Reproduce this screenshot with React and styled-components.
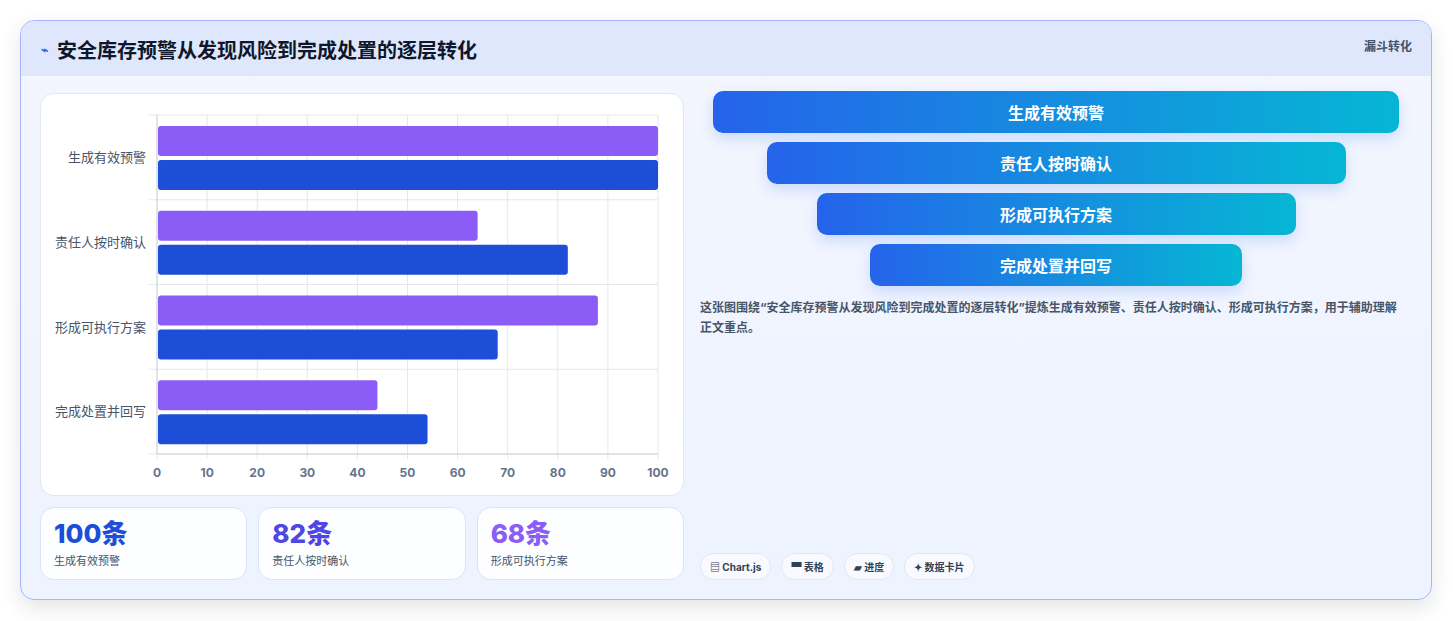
import React from "react";
import styled, { createGlobalStyle } from "styled-components";

const G = createGlobalStyle`
  body{margin:0;background:#fff;font-family:Inter,"Noto Sans CJK SC",sans-serif;}
`;
const Page = styled.div`padding:20px 21px 21px 20px;height:621px;box-sizing:border-box;`;
const Card = styled.div`
  height:580px;box-sizing:border-box;border:1px solid #a5b4fc;border-radius:14px;overflow:hidden;
  background:linear-gradient(180deg,#f3f6fe,#edf3ff);box-shadow:0 8px 20px rgba(30,41,59,.12);
  display:flex;flex-direction:column;`;
const Header = styled.div`
  height:55px;background:#dfe7fd;display:flex;align-items:flex-start;justify-content:space-between;padding:0 19px 0 20px;`;
const Title = styled.h1`margin:14px 0 0;font-size:20px;font-weight:700;color:#0f172a;display:flex;align-items:center;gap:9px;`;
const Badge = styled.span`margin-top:16px;font-size:12px;font-weight:700;color:#475569;`;
const Body = styled.div`flex:1;display:grid;grid-template-columns:644px 1fr;gap:16px;padding:17px 19px 19px 19px;`;
const Left = styled.div`display:flex;flex-direction:column;gap:11px;`;
const ChartCard = styled.div`height:403px;background:#fff;border:1px solid #e2e8f0;border-radius:14px;box-sizing:border-box;`;
const Stats = styled.div`display:grid;grid-template-columns:repeat(3,1fr);gap:11px;`;
const Stat = styled.div`height:73px;box-sizing:border-box;background:rgba(255,255,255,.85);border:1px solid #dbe4f5;border-radius:14px;padding:10px 13px;`;
const Num = styled.div`font-size:26px;font-weight:800;color:${p=>p.c};line-height:32px;`;
const Lab = styled.div`font-size:11px;color:#475569;margin-top:2px;`;
const Right = styled.div`display:flex;flex-direction:column;`;
const Funnel = styled.div`display:flex;flex-direction:column;align-items:center;gap:9px;margin-top:-2px;`;
const Step = styled.div`
  width:${p=>p.w}px;height:42px;border-radius:10px;background:linear-gradient(90deg,#2563eb,#06b6d4);
  color:#fff;font-weight:700;font-size:16px;display:flex;align-items:center;justify-content:center;
  box-shadow:0 6px 14px rgba(37,99,235,.18);`;
const Desc = styled.p`margin:12px 8px 0 0;font-size:12px;font-weight:700;color:#475569;line-height:20px;`;
const Tags = styled.div`margin-top:auto;display:flex;gap:10px;`;
const Tag = styled.span`height:27px;box-sizing:border-box;padding:0 9px;border:1px solid #e2e8f0;border-radius:14px;background:#f8faff;font-size:10px;font-weight:700;color:#334155;display:flex;align-items:center;gap:3px;`;

const cats=["生成有效预警","责任人按时确认","形成可执行方案","完成处置并回写"];
const pv=[100,64,88,44], bv=[100,82,68,54];
const L=116,R=617,T=21,B=360,rh=(B-T)/4,sx=(R-L)/100;

function Chart(){
  return <svg width="642" height="401" style={{display:"block"}}>
    {Array.from({length:11}).map((_,i)=><g key={i}>
      <line x1={L+i*50.1} x2={L+i*50.1} y1={T} y2={B+5} stroke="#e5e7eb"/>
      <text x={L+i*50.1} y={383} fontSize="12" fontWeight="700" fill="#64748b" textAnchor="middle">{i*10}</text>
    </g>)}
    {[0,1,2,3,4].map(i=><line key={i} x1={L-8} x2={R} y1={T+i*rh} y2={T+i*rh} stroke="#e5e7eb"/>)}
    <line x1={L} x2={L} y1={T} y2={B} stroke="#cbd5e1"/>
    <line x1={L} x2={R} y1={B} y2={B} stroke="#cbd5e1"/>
    {cats.map((c,i)=><g key={c}>
      <text x={105} y={T+i*rh+47} fontSize="13" fill="#475569" textAnchor="end">{c}</text>
      <rect x={L+1} y={T+i*rh+11} width={pv[i]*sx-1} height={30} rx="3" fill="#8b5cf6"/>
      <rect x={L+1} y={T+i*rh+45} width={bv[i]*sx-1} height={30} rx="3" fill="#1d4ed8"/>
    </g>)}
  </svg>;
}

export default function App(){
  return <Page><G/><Card>
    <Header><Title><span style={{fontSize:12,color:"#2563eb"}}>⌁</span>安全库存预警从发现风险到完成处置的逐层转化</Title><Badge>漏斗转化</Badge></Header>
    <Body>
      <Left>
        <ChartCard><Chart/></ChartCard>
        <Stats>
          <Stat><Num c="#1d4ed8">100条</Num><Lab>生成有效预警</Lab></Stat>
          <Stat><Num c="#4f46e5">82条</Num><Lab>责任人按时确认</Lab></Stat>
          <Stat><Num c="#8b5cf6">68条</Num><Lab>形成可执行方案</Lab></Stat>
        </Stats>
      </Left>
      <Right>
        <Funnel>
          <Step w={686}>生成有效预警</Step>
          <Step w={579}>责任人按时确认</Step>
          <Step w={479}>形成可执行方案</Step>
          <Step w={372}>完成处置并回写</Step>
        </Funnel>
        <Desc>这张图围绕“安全库存预警从发现风险到完成处置的逐层转化”提炼生成有效预警、责任人按时确认、形成可执行方案，用于辅助理解正文重点。</Desc>
        <Tags><Tag>▤ Chart.js</Tag><Tag>▀ 表格</Tag><Tag>▰ 进度</Tag><Tag>✦ 数据卡片</Tag></Tags>
      </Right>
    </Body>
  </Card></Page>;
}
